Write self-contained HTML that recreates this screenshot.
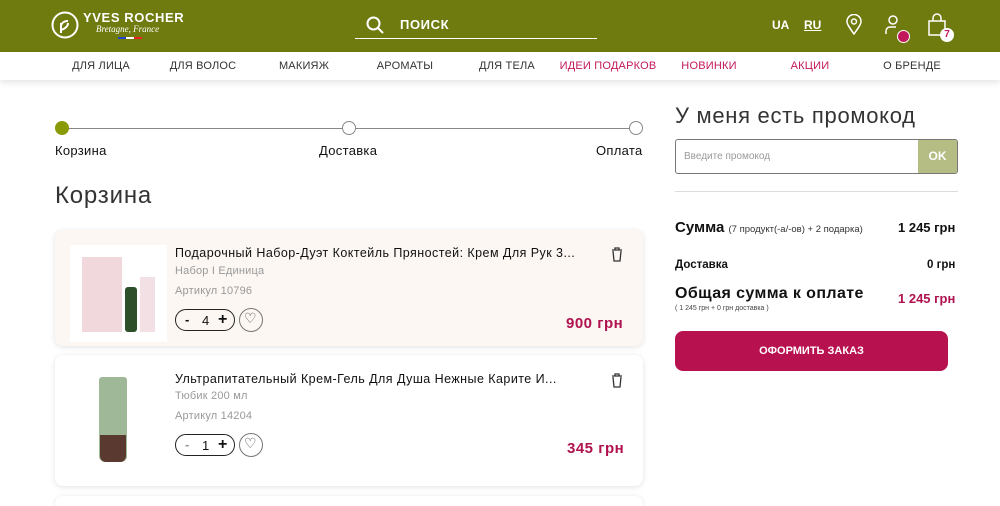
<!DOCTYPE html>
<html><head><meta charset="utf-8"><style>
*{box-sizing:border-box;margin:0;padding:0}
html,body{width:1000px;height:506px;overflow:hidden}
body{background:#fff;font-family:"Liberation Sans","DejaVu Sans",sans-serif;color:#111;position:relative}
.hdr{position:absolute;left:0;top:0;width:1000px;height:52px;background:#6f7b0f}
.nav{position:absolute;top:52px;left:0;width:1000px;height:28px;box-shadow:0 3px 6px rgba(0,0,0,.1);background:#fff}
.nav span{position:absolute;top:8px;font-size:11px;color:#333;transform:translateX(-50%);white-space:nowrap;letter-spacing:.2px}
.nav .p{color:#c2185b}
.a{position:absolute;white-space:nowrap}
.card{position:absolute;left:55px;width:588px;border-radius:8px;box-shadow:0 1px 6px rgba(0,0,0,.12)}
.ttl{font-size:12.5px;color:#111;letter-spacing:.45px}
.sub{font-size:11px;color:#999;letter-spacing:.2px}
.qty{position:absolute;width:60px;height:22px;border:1px solid #222;border-radius:11px;font-size:13px}
.heart{position:absolute;width:24px;height:24px;border:1px solid #777;border-radius:50%}
</style></head><body>
<div class="hdr">
 <svg class="a" style="left:51px;top:11px" width="28" height="28" viewBox="0 0 28 28"><circle cx="14" cy="14" r="12.5" fill="none" stroke="#fff" stroke-width="2"/><path d="M10 22V12M10 16c0-4 3-6 7-6M10 19c3-1 7-3 7-7" stroke="#fff" stroke-width="2" fill="none"/></svg>
 <div class="a" style="left:83px;top:10px;color:#fff;font-weight:bold;font-size:13px;letter-spacing:.6px">YVES ROCHER</div>
 <div class="a" style="left:96px;top:24px;color:#fff;font-style:italic;font-size:9px;font-family:'Liberation Serif',serif">Bretagne, France</div>
 <div class="a" style="left:118px;top:37px;width:24px;height:2px;background:linear-gradient(90deg,#2244cc 33%,#fff 33% 66%,#e22 66%)"></div>
 <svg class="a" style="left:366px;top:16px" width="18" height="18" viewBox="0 0 18 18"><circle cx="7.5" cy="7.5" r="6" fill="none" stroke="#fff" stroke-width="2"/><path d="M12 12l5 5" stroke="#fff" stroke-width="2"/></svg>
 <div class="a" style="left:400px;top:17px;color:#fff;font-weight:bold;font-size:13px;letter-spacing:.6px">ПОИСК</div>
 <div class="a" style="left:355px;top:38px;width:242px;height:1px;background:#fff"></div>
 <div class="a" style="left:772px;top:18px;color:#fff;font-weight:bold;font-size:12px">UA</div>
 <div class="a" style="left:804px;top:18px;color:#fff;font-weight:bold;font-size:12px;text-decoration:underline">RU</div>
 <svg class="a" style="left:845px;top:14px" width="18" height="22" viewBox="0 0 18 22"><path d="M9 20C4 13 2 10 2 7.5a7 7 0 0 1 14 0C16 10 14 13 9 20z" fill="none" stroke="#fff" stroke-width="1.5"/><circle cx="9" cy="7.5" r="2.5" fill="none" stroke="#fff" stroke-width="1.5"/></svg>
 <svg class="a" style="left:884px;top:14px" width="22" height="22" viewBox="0 0 22 22"><circle cx="9" cy="6" r="4" fill="none" stroke="#fff" stroke-width="1.5"/><path d="M2 20v-3a4 4 0 0 1 4-4h6" fill="none" stroke="#fff" stroke-width="1.5"/></svg>
 <div class="a" style="left:897px;top:30px;width:13px;height:13px;border-radius:50%;background:#c2185b;border:1px solid #fff"></div>
 <svg class="a" style="left:927px;top:13px" width="20" height="24" viewBox="0 0 20 24"><path d="M2 8h16v14H2z" fill="none" stroke="#fff" stroke-width="1.5"/><path d="M6 8V5a4 4 0 0 1 8 0v3" fill="none" stroke="#fff" stroke-width="1.5"/></svg>
 <div class="a" style="left:940px;top:28px;width:14px;height:14px;border-radius:50%;background:#fff;color:#c2185b;font-size:10px;font-weight:bold;text-align:center;line-height:14px">7</div>
</div>
<div class="nav">
 <span style="left:101px">ДЛЯ ЛИЦА</span><span style="left:203px">ДЛЯ ВОЛОС</span><span style="left:304px">МАКИЯЖ</span><span style="left:405px">АРОМАТЫ</span><span style="left:507px">ДЛЯ ТЕЛА</span><span class="p" style="left:608px">ИДЕИ ПОДАРКОВ</span><span class="p" style="left:709px">НОВИНКИ</span><span class="p" style="left:810px">АКЦИИ</span><span style="left:912px">О БРЕНДЕ</span>
</div>
<div class="a" style="left:62px;top:128px;width:574px;height:1px;background:#888"></div>
<div class="a" style="left:55px;top:121px;width:14px;height:14px;border-radius:50%;background:#8a9a05"></div>
<div class="a" style="left:342px;top:121px;width:14px;height:14px;border-radius:50%;background:#fff;border:1px solid #888"></div>
<div class="a" style="left:629px;top:121px;width:14px;height:14px;border-radius:50%;background:#fff;border:1px solid #888"></div>
<div class="a" style="left:55px;top:143px;font-size:13px;letter-spacing:.3px">Корзина</div>
<div class="a" style="left:319px;top:143px;font-size:13px;letter-spacing:.3px">Доставка</div>
<div class="a" style="left:596px;top:143px;font-size:13px;letter-spacing:.3px">Оплата</div>
<div class="a" style="left:55px;top:182px;font-size:24px;color:#333;letter-spacing:.8px">Корзина</div>

<div class="card" style="top:230px;height:116px;background:#fcf7f3">
 <div class="a" style="left:15px;top:15px;width:97px;height:97px;background:#fff"><div class="a" style="left:12px;top:12px;width:40px;height:75px;background:#f0d8dc"></div><div class="a" style="left:55px;top:42px;width:12px;height:45px;background:#2d4f2a;border-radius:3px"></div><div class="a" style="left:70px;top:32px;width:15px;height:55px;background:#f3e0e4"></div></div>
 <div class="a ttl" style="left:120px;top:16px">Подарочный Набор-Дуэт Коктейль Пряностей: Крем Для Рук 3...</div>
 <div class="a sub" style="left:120px;top:35px">Набор I Единица</div>
 <div class="a sub" style="left:120px;top:55px">Артикул 10796</div>
 <div class="qty" style="left:120px;top:79px"><b class="a" style="left:9px;top:2px">-</b><span class="a" style="left:26px;top:3px">4</span><b class="a" style="left:42px;top:1px;font-size:16px">+</b></div>
 <div class="heart" style="left:184px;top:78px"></div><div class="a" style="left:189px;top:80px;font-size:14px;color:#444">♡</div>
 <svg class="a" style="left:556px;top:17px" width="12" height="15" viewBox="0 0 12 15"><path d="M1 3h10M4 3V1h4v2M2 4l1 10h6l1-10" fill="none" stroke="#333" stroke-width="1.3"/></svg>
 <div class="a" style="left:511px;top:85px;font-size:15px;font-weight:bold;color:#b0124f;letter-spacing:.5px">900 грн</div>
</div>
<div class="card" style="top:355px;height:131px;background:#fff">
 <div class="a" style="left:44px;top:22px;width:28px;height:85px;background:#9fb898;border-radius:3px 3px 6px 6px"></div><div class="a" style="left:45px;top:80px;width:26px;height:27px;background:#5a3a30;border-radius:0 0 6px 6px"></div>
 <div class="a ttl" style="left:120px;top:17px">Ультрапитательный Крем-Гель Для Душа Нежные Карите И...</div>
 <div class="a sub" style="left:120px;top:35px">Тюбик 200 мл</div>
 <div class="a sub" style="left:120px;top:55px">Артикул 14204</div>
 <div class="qty" style="left:120px;top:79px"><b class="a" style="left:9px;top:2px;color:#999">-</b><span class="a" style="left:26px;top:3px">1</span><b class="a" style="left:42px;top:1px;font-size:16px">+</b></div>
 <div class="heart" style="left:184px;top:78px"></div><div class="a" style="left:189px;top:80px;font-size:14px;color:#444">♡</div>
 <svg class="a" style="left:556px;top:18px" width="12" height="15" viewBox="0 0 12 15"><path d="M1 3h10M4 3V1h4v2M2 4l1 10h6l1-10" fill="none" stroke="#333" stroke-width="1.3"/></svg>
 <div class="a" style="left:512px;top:85px;font-size:15px;font-weight:bold;color:#b0124f;letter-spacing:.5px">345 грн</div>
</div>
<div class="card" style="top:496px;height:10px;background:#fff;border-radius:8px 8px 0 0"></div>

<div class="a" style="left:675px;top:103px;font-size:22px;color:#333;letter-spacing:.7px">У меня есть промокод</div>
<div class="a" style="left:675px;top:139px;width:283px;height:35px;border:1px solid #777;border-radius:3px;overflow:hidden">
 <div class="a" style="left:8px;top:11px;font-size:10px;color:#999">Введите промокод</div>
 <div class="a" style="right:0;top:0;width:39px;height:35px;background:#b5bd85;color:#fff;font-weight:bold;font-size:12px;text-align:center;line-height:33px">OK</div>
</div>
<div class="a" style="left:675px;top:191px;width:283px;height:1px;background:#ddd"></div>
<div class="a" style="left:675px;top:219px;font-size:15px;font-weight:bold">Сумма <span style="font-size:9.5px;font-weight:normal;color:#333">(7 продукт(-а/-ов) + 2 подарка)</span></div>
<div class="a" style="left:898px;top:220px;font-size:13px;font-weight:bold">1 245 грн</div>
<div class="a" style="left:675px;top:259px;font-size:11.5px;font-weight:bold">Доставка</div>
<div class="a" style="left:927px;top:259px;font-size:11.5px;font-weight:bold">0 грн</div>
<div class="a" style="left:675px;top:285px;font-size:16px;font-weight:bold;letter-spacing:.4px">Общая сумма к оплате</div>
<div class="a" style="left:675px;top:305px;font-size:7px;color:#444">( 1 245 грн + 0 грн доставка )</div>
<div class="a" style="left:898px;top:291px;font-size:13px;font-weight:bold;color:#b0124f">1 245 грн</div>
<div class="a" style="left:675px;top:331px;width:273px;height:40px;border-radius:8px;background:#b8114f;color:#fff;font-weight:bold;font-size:11px;text-align:center;line-height:40px">ОФОРМИТЬ ЗАКАЗ</div>
</body></html>
